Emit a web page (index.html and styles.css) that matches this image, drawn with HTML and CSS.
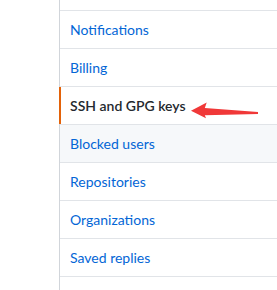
FILE: index.html
```html
<!DOCTYPE html>
<html lang="en">
<head>
<meta charset="utf-8">
<title>Settings menu</title>
<link rel="stylesheet" href="styles.css">
</head>
<body>
<div class="layout">
  <nav class="menu">
    <span class="menu-item spacer-top" aria-hidden="true"></span>
    <a class="menu-item" href="#">Notifications</a>
    <a class="menu-item" href="#">Billing</a>
    <a class="menu-item selected" href="#">SSH and GPG keys
      <svg class="arrow" viewBox="0 0 80 25" width="80" height="25" aria-hidden="true">
        <path d="M6 12.7 L21.7 4.5 L19.8 10 L73 14 L73 16 L19.8 17.3 L21 20.3 Z" fill="#f03838"/>
      </svg>
    </a>
    <a class="menu-item hover" href="#">Blocked users</a>
    <a class="menu-item" href="#">Repositories</a>
    <a class="menu-item" href="#">Organizations</a>
    <a class="menu-item" href="#">Saved replies</a>
    <span class="menu-item spacer-bottom" aria-hidden="true"></span>
  </nav>
</div>
</body>
</html>
```
FILE: styles.css
```css
html, body {
  margin: 0;
  padding: 0;
  background: #fff;
  overflow: hidden;
}

.layout {
  padding-left: 59px;
}

.menu {
  display: flex;
  flex-direction: column;
  border-left: 1px solid #d1d5da;
  font-family: Lato, "Liberation Sans", sans-serif;
  font-size: 14px;
  line-height: 21px;
}

.menu-item {
  position: relative;
  display: block;
  padding: 8px 10px;
  border-bottom: 1px solid #e1e4e8;
  color: #0366d6;
  text-decoration: none;
}

.menu-item.spacer-top {
  height: 10px;
  padding: 0;
}

.menu-item.spacer-bottom {
  height: 13px;
  padding: 0;
  border-bottom: 0;
}

.menu-item.hover {
  background: #f6f8fa;
}

.menu-item.selected {
  color: #24292e;
  font-weight: 600;
}

.menu-item.selected::before {
  content: "";
  position: absolute;
  top: 0;
  bottom: 0;
  left: -1px;
  width: 2px;
  background: #e36209;
}

.arrow {
  position: absolute;
  left: 125px;
  top: 11px;
}
```
